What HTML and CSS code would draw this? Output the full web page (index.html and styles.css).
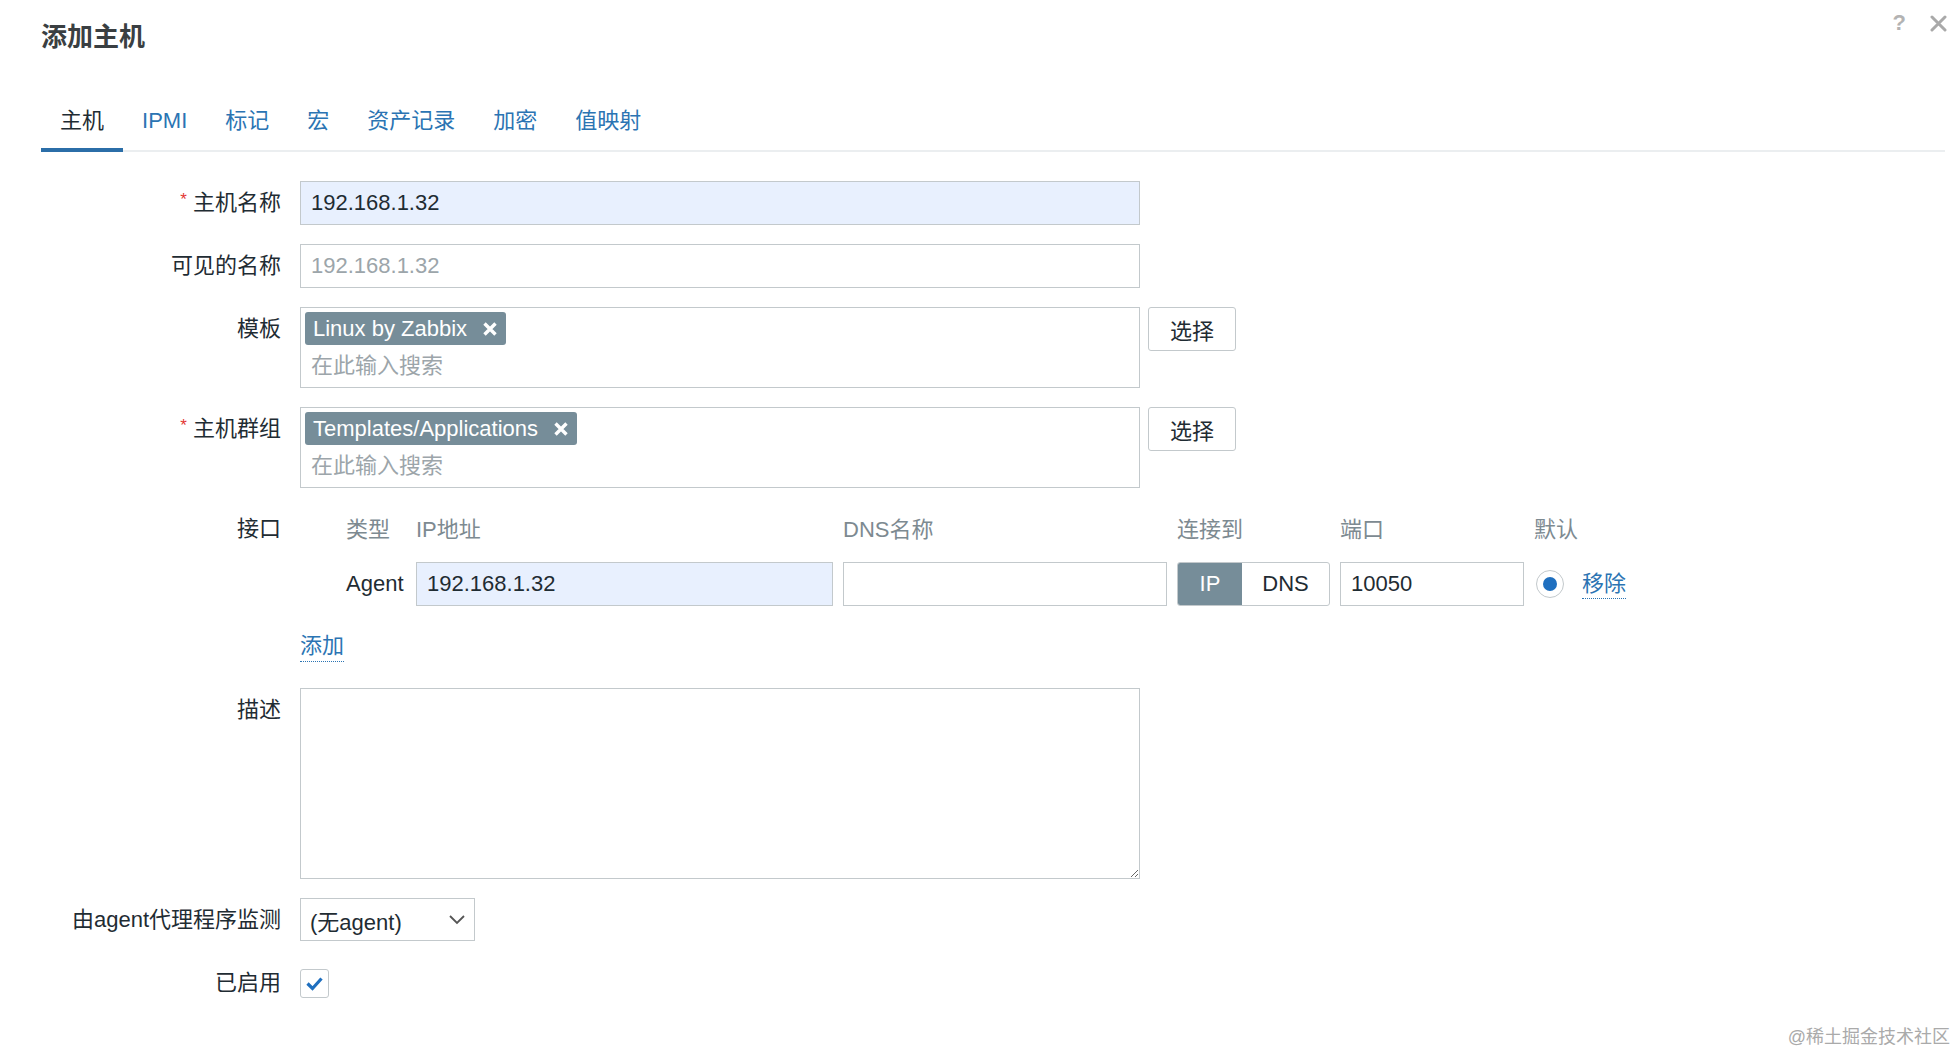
FILE: index.html
```html
<!DOCTYPE html>
<html lang="zh-CN">
<head>
<meta charset="utf-8">
<title>添加主机</title>
<link rel="stylesheet" href="styles.css">
</head>
<body>
<div class="dialog">
  <div class="head"><h1 class="title">添加主机</h1></div>
  <div class="tools">
    <span class="help">?</span>
    <svg class="close" width="17" height="17" viewBox="0 0 17 17"><path d="M2 2 L15 15 M15 2 L2 15" stroke="#a9a9a9" stroke-width="3" stroke-linecap="round"/></svg>
  </div>

  <ul class="tabs">
    <li class="tab active">主机</li>
    <li class="tab">IPMI</li>
    <li class="tab">标记</li>
    <li class="tab">宏</li>
    <li class="tab">资产记录</li>
    <li class="tab">加密</li>
    <li class="tab">值映射</li>
  </ul>

  <div class="form">
    <div class="label"><span class="ast">*</span>主机名称</div>
    <div class="field"><input class="text filled" type="text" value="192.168.1.32"></div>

    <div class="label">可见的名称</div>
    <div class="field"><input class="text" type="text" placeholder="192.168.1.32"></div>

    <div class="label">模板</div>
    <div class="field ms-row">
      <div class="ms">
        <span class="tag">Linux by Zabbix<svg class="tag-x" width="16" height="16" viewBox="0 0 16 16"><path d="M2.5 2.5 L13.5 13.5 M13.5 2.5 L2.5 13.5" stroke="#fff" stroke-width="3.4"/></svg></span>
        <div class="ms-ph">在此输入搜索</div>
      </div>
      <button class="btn" type="button">选择</button>
    </div>

    <div class="label"><span class="ast">*</span>主机群组</div>
    <div class="field ms-row">
      <div class="ms">
        <span class="tag">Templates/Applications<svg class="tag-x" width="16" height="16" viewBox="0 0 16 16"><path d="M2.5 2.5 L13.5 13.5 M13.5 2.5 L2.5 13.5" stroke="#fff" stroke-width="3.4"/></svg></span>
        <div class="ms-ph">在此输入搜索</div>
      </div>
      <button class="btn" type="button">选择</button>
    </div>

    <div class="label">接口</div>
    <div class="field">
      <div class="iface">
        <div class="if-grid">
          <div class="if-head">类型</div>
          <div class="if-head">IP地址</div>
          <div class="if-head">DNS名称</div>
          <div class="if-head">连接到</div>
          <div class="if-head">端口</div>
          <div class="if-head">默认</div>
          <div class="if-head"></div>

          <div class="if-type">Agent</div>
          <input class="text cell filled" type="text" value="192.168.1.32">
          <input class="text cell" type="text" value="">
          <div class="toggle"><span class="tg tg-on">IP</span><span class="tg">DNS</span></div>
          <input class="text cell" type="text" value="10050">
          <div class="radio-cell"><span class="radio"><span class="dot"></span></span></div>
          <div><span class="link">移除</span></div>
        </div>
      </div>
      <div class="add-row"><span class="link">添加</span></div>
    </div>

    <div class="label">描述</div>
    <div class="field"><textarea class="area"></textarea></div>

    <div class="label">由agent代理程序监测</div>
    <div class="field">
      <div class="sel"><span>(无agent)</span><svg width="18" height="12" viewBox="0 0 18 12"><path d="M2 2 L9 9 L16 2" fill="none" stroke="#555" stroke-width="1.8"/></svg></div>
    </div>

    <div class="label">已启用</div>
    <div class="field check-field">
      <span class="check"><svg width="23" height="23" viewBox="0 0 23 23"><path d="M4.5 11.5 L9.5 16.5 L18.5 6.5" fill="none" stroke="#1f6fbf" stroke-width="3.2"/></svg></span>
    </div>
  </div>

  <div class="watermark">@稀土掘金技术社区</div>
</div>
</body>
</html>
```

FILE: styles.css
```css
html, body {
  margin: 0;
  padding: 0;
  background: #ffffff;
}

body {
  font-family: "Liberation Sans", "Noto Sans CJK SC", sans-serif;
  font-size: 22px;
  color: #1f2c33;
}

.dialog {
  position: relative;
  box-sizing: border-box;
  height: 1054px;
  padding: 0 13px 0 41px;
  overflow: hidden;
}

.head {
  height: 74px;
  display: flex;
  align-items: center;
}

.title {
  margin: 0;
  font-size: 26px;
  line-height: 30px;
  font-weight: 700;
  color: #3a3f42;
}

.tools {
  position: absolute;
  top: 12px;
  right: 11px;
  display: flex;
  align-items: center;
  gap: 24px;
}

.help {
  font-size: 22px;
  font-weight: 700;
  color: #b3b3b3;
  line-height: 22px;
}

.tabs {
  list-style: none;
  margin: 17px 0 0;
  padding: 0;
  display: flex;
  border-bottom: 2px solid #ebeef0;
}

.tab {
  padding: 17px 19px 14px;
  line-height: 26px;
  border-bottom: 4px solid transparent;
  margin-bottom: -2px;
  color: #2b74b3;
}

.tab.active {
  color: #1f2c33;
  border-bottom-color: #2b6ea8;
}

.form {
  display: grid;
  grid-template-columns: 240px auto;
  column-gap: 19px;
  row-gap: 19px;
  margin-top: 29px;
  align-items: start;
}

.label {
  height: 44px;
  display: flex;
  align-items: center;
  justify-content: flex-end;
  white-space: nowrap;
  line-height: 26px;
}

.ast {
  color: #e33734;
  font-size: 17px;
  margin-right: 6px;
  margin-bottom: 7px;
}

.text {
  display: block;
  box-sizing: border-box;
  width: 840px;
  height: 44px;
  margin: 0;
  border: 1px solid #c3c9cc;
  padding: 0 10px;
  font: inherit;
  color: #1f2c33;
  background: #ffffff;
  outline: none;
}

.text::placeholder {
  color: #9ca5aa;
}

.text.filled {
  background: #e8f0fe;
}

.ms-row {
  display: flex;
  gap: 8px;
  align-items: flex-start;
}

.ms {
  box-sizing: border-box;
  width: 840px;
  height: 81px;
  border: 1px solid #c3c9cc;
  padding: 4px;
}

.tag {
  display: inline-flex;
  align-items: center;
  gap: 15px;
  height: 33px;
  padding: 0 8px 0 8px;
  border-radius: 3px;
  background: #768d99;
  color: #ffffff;
  line-height: 33px;
}

.ms-ph {
  height: 42px;
  line-height: 42px;
  padding-left: 6px;
  color: #9ca5aa;
}

.btn {
  box-sizing: border-box;
  width: 88px;
  height: 44px;
  border: 1px solid #c3c9cc;
  border-radius: 3px;
  background: #ffffff;
  font: inherit;
  color: #1f2c33;
  padding: 0;
}

.iface {
  padding-left: 46px;
}

.if-grid {
  display: grid;
  grid-template-columns: 60px 417px 324px 153px 184px 38px auto;
  column-gap: 10px;
  row-gap: 11px;
  align-items: center;
}

.if-head {
  height: 44px;
  line-height: 46px;
  color: #7d8a91;
  white-space: nowrap;
}

.if-type {
  white-space: nowrap;
}

.text.cell {
  width: 100%;
}

.toggle {
  box-sizing: border-box;
  display: flex;
  height: 44px;
  border: 1px solid #c3c9cc;
  border-radius: 3px;
  overflow: hidden;
}

.tg {
  flex: 1;
  display: flex;
  align-items: center;
  justify-content: center;
}

.tg-on {
  flex: 0 0 64px;
  background: #768d99;
  color: #ffffff;
}

.radio-cell {
  display: flex;
  padding-left: 2px;
}

.radio {
  box-sizing: border-box;
  width: 28px;
  height: 28px;
  border-radius: 50%;
  border: 1px solid #c3c9cc;
  display: flex;
  align-items: center;
  justify-content: center;
}

.dot {
  width: 14px;
  height: 14px;
  border-radius: 50%;
  background: #1f6fbf;
}

.link {
  color: #2b74b3;
  border-bottom: 1px dotted #2b74b3;
  line-height: 26px;
  padding-bottom: 2px;
  white-space: nowrap;
}

.add-row {
  margin-top: 19px;
  height: 44px;
  display: flex;
  align-items: center;
}

.area {
  display: block;
  box-sizing: border-box;
  width: 840px;
  height: 191px;
  margin: 0;
  border: 1px solid #c3c9cc;
  padding: 8px 10px;
  font: inherit;
  resize: vertical;
  outline: none;
}

.sel {
  box-sizing: border-box;
  width: 175px;
  height: 43px;
  border: 1px solid #c3c9cc;
  display: flex;
  align-items: center;
  justify-content: space-between;
  padding: 0 8px 0 9px;
  background: #ffffff;
}

.check-field {
  height: 44px;
  display: flex;
  align-items: center;
}

.check {
  box-sizing: border-box;
  width: 29px;
  height: 29px;
  border: 1px solid #c3c9cc;
  border-radius: 3px;
  display: flex;
  align-items: center;
  justify-content: center;
}

.watermark {
  position: absolute;
  right: 8px;
  bottom: 6px;
  font-size: 18px;
  color: #aaaaaa;
  line-height: 22px;
}
```
